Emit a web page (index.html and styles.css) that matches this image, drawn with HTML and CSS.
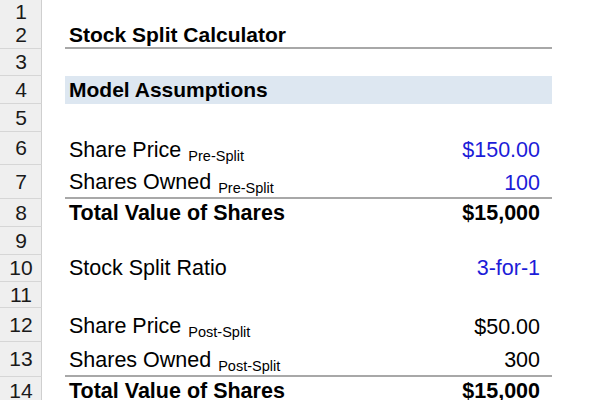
FILE: index.html
```html
<!DOCTYPE html>
<html>
<head>
<meta charset="utf-8">
<link rel="stylesheet" href="styles.css">
</head>
<body>
<div class="sheet">
  <div class="row h21"><div class="rh">1</div><div class="gap"></div><div class="cell"></div></div>
  <div class="row h28"><div class="rh">2</div><div class="gap"></div><div class="cell title line">Stock Split Calculator</div></div>
  <div class="row h27"><div class="rh">3</div><div class="gap"></div><div class="cell"></div></div>
  <div class="row h28"><div class="rh">4</div><div class="gap"></div><div class="cell section">Model Assumptions</div></div>
  <div class="row h28"><div class="rh">5</div><div class="gap"></div><div class="cell"></div></div>
  <div class="row h33"><div class="rh">6</div><div class="gap"></div><div class="cell low"><span>Share Price <sub>Pre-Split</sub></span><span class="input">$150.00</span></div></div>
  <div class="row h34"><div class="rh">7</div><div class="gap"></div><div class="cell low line"><span>Shares Owned <sub>Pre-Split</sub></span><span class="input">100</span></div></div>
  <div class="row h28"><div class="rh">8</div><div class="gap"></div><div class="cell bold"><span>Total Value of Shares</span><span>$15,000</span></div></div>
  <div class="row h28"><div class="rh">9</div><div class="gap"></div><div class="cell"></div></div>
  <div class="row h27"><div class="rh">10</div><div class="gap"></div><div class="cell"><span>Stock Split Ratio</span><span class="input">3-for-1</span></div></div>
  <div class="row h26"><div class="rh">11</div><div class="gap"></div><div class="cell"></div></div>
  <div class="row h34"><div class="rh">12</div><div class="gap"></div><div class="cell low"><span>Share Price <sub>Post-Split</sub></span><span>$50.00</span></div></div>
  <div class="row h35"><div class="rh">13</div><div class="gap"></div><div class="cell low line"><span>Shares Owned <sub>Post-Split</sub></span><span>300</span></div></div>
  <div class="row h28"><div class="rh">14</div><div class="gap"></div><div class="cell bold"><span>Total Value of Shares</span><span>$15,000</span></div></div>
</div>
</body>
</html>
```

FILE: styles.css
```css
html, body {
  margin: 0;
  padding: 0;
  background: #ffffff;
}
body {
  font-family: "Liberation Sans", Arial, sans-serif;
  font-size: 21.5px;
  color: #000000;
  overflow: hidden;
}
.sheet {
  display: flex;
  flex-direction: column;
  width: 600px;
}
.row {
  display: grid;
  grid-template-columns: 42px 23px 487px 48px;
}
.h21 { height: 21px; }
.h26 { height: 26px; }
.h27 { height: 27px; }
.h28 { height: 28px; }
.h33 { height: 33px; }
.h34 { height: 34px; }
.h35 { height: 35px; }
.rh {
  background: #efefef;
  border-right: 1px solid #cfcfcf;
  border-bottom: 1px solid #d6d6d6;
  box-sizing: border-box;
  display: flex;
  align-items: center;
  justify-content: center;
  font-size: 21px;
  color: #1a1a1a;
  padding-left: 1px;
}
.cell {
  display: flex;
  align-items: center;
  justify-content: space-between;
  padding: 0 12px 0 4px;
  box-sizing: border-box;
  white-space: nowrap;
}
.low {
  padding-top: 4px;
}
.title {
  font-weight: bold;
  font-size: 21px;
  padding-top: 2px;
}
.line {
  border-bottom: 2px solid #a8a8a8;
}
.section {
  background: #dde7f1;
  font-weight: bold;
  font-size: 21px;
}
.bold {
  font-weight: bold;
}
.input {
  color: #1c1cd8;
}
sub {
  font-size: 14.5px;
  vertical-align: -4px;
  margin-left: 1px;
}
```
